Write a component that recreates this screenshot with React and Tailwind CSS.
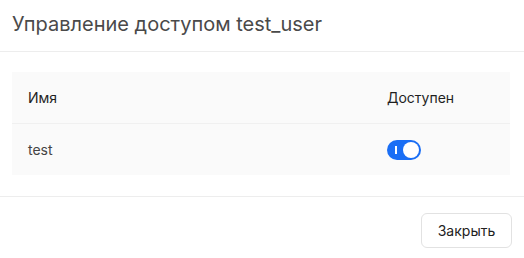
export default function App() {
  return (
    <div className="w-[524px] h-[258px] bg-white text-[14px] text-[#1f1f1f] font-['Inter','Noto_Sans',sans-serif]">
      {/* Заголовок окна */}
      <div className="h-[52px] px-3 flex items-center border-b border-[#ededed]">
        <h2 className="text-[20px] text-[#4a4a4a] leading-none -mt-1">Управление доступом test_user</h2>
      </div>

      {/* Таблица */}
      <div className="px-3 pt-5 pb-[21px] border-b border-[#ededed]">
        <div className="bg-[#fafafa] w-[498px]">
          <div className="grid grid-cols-[359px_1fr] h-[52px] items-center border-b border-[#f0f0f0]">
            <div className="pl-4">Имя</div>
            <div className="pl-4">Доступен</div>
          </div>
          <div className="grid grid-cols-[359px_1fr] h-[51px] items-center">
            <div className="pl-4 text-[#444]">test</div>
            <div className="pl-4">
              <button className="relative w-[34px] h-[20px] rounded-full bg-[#1a6ef5] flex items-center">
                <span className="absolute left-[8px] top-[6px] w-[1.5px] h-[8px] bg-white"></span>
                <span className="absolute right-[2px] top-[2px] w-[16px] h-[16px] rounded-full bg-white"></span>
              </button>
            </div>
          </div>
        </div>
      </div>

      {/* Футер */}
      <div className="flex justify-end px-3 pt-4">
        <button className="w-[91px] h-[35px] rounded-md border border-[#e2e2e2] bg-white text-[14px] text-[#222]">
          Закрыть
        </button>
      </div>
    </div>
  );
}
